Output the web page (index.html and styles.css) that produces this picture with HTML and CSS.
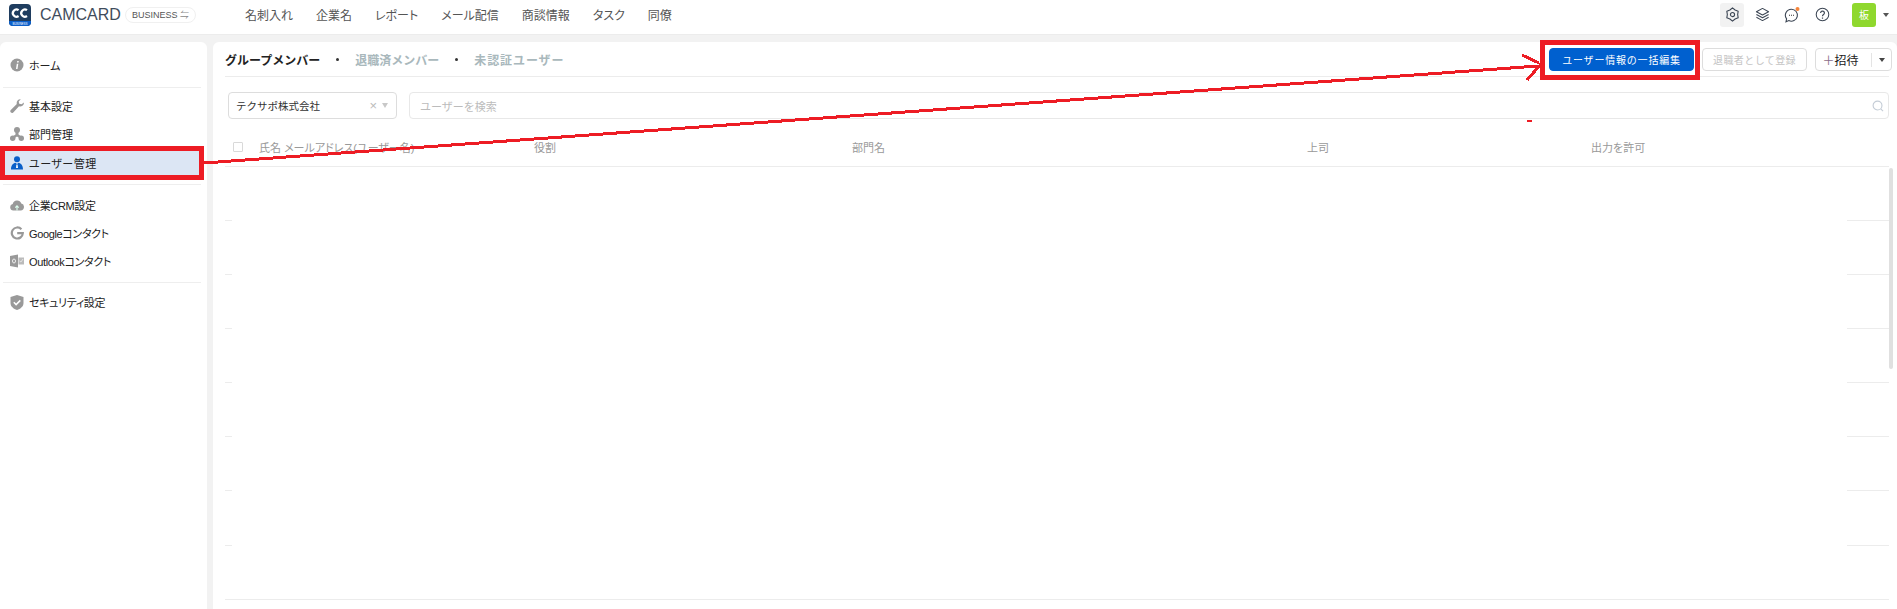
FILE: index.html
```html
<!DOCTYPE html>
<html lang="ja">
<head>
  <meta charset="UTF-8">
  <title>CAMCARD BUSINESS</title>
  <link rel="stylesheet" href="styles.css">
</head>
<body>
  <header class="topbar">
    <div class="brand">
      <svg class="logo" width="22" height="22" viewBox="0 0 22 22">
        <rect width="22" height="22" rx="4" fill="#1f3d5f"/>
        <path d="M0 17h22v1a4 4 0 0 1-4 4H4a4 4 0 0 1-4-4z" fill="#0b5fcb"/>
        <path d="M9.600 6.200A3.600 3.600 0 1 0 9.600 12M18 6.200A3.600 3.600 0 1 0 18 12" fill="none" stroke="#fff" stroke-width="2.200"/>
        <text x="11" y="20.500" text-anchor="middle" font-size="3" fill="#fff" font-family="Liberation Sans">BUSINESS</text>
      </svg>
      <span class="brand-name">CAMCARD</span>
      <span class="edition">BUSINESS <span class="edition-swap">⇋</span></span>
    </div>
    <nav class="main-nav">
      <a>名刺入れ</a>
      <a>企業名</a>
      <a>レポート</a>
      <a>メール配信</a>
      <a>商談情報</a>
      <a>タスク</a>
      <a>同僚</a>
    </nav>
    <div class="tools">
      <span class="tool tool-active">
        <svg width="15" height="15" viewBox="0 0 16 16" fill="none" stroke="#3c4654" stroke-width="1.200" stroke-linejoin="round"><path d="M8 1l2.750 2.240 3.310 1.260-.56 3.500.56 3.500-3.310 1.260L8 15l-2.750-2.240-3.310-1.260.56-3.500-.56-3.500 3.310-1.260z"/><circle cx="8" cy="8" r="2.200"/></svg>
      </span>
      <span class="tool">
        <svg width="15" height="15" viewBox="0 0 16 16" fill="none" stroke="#3c4654" stroke-width="1.100" stroke-linejoin="round"><path d="M8 1.500l6.500 3.500L8 8.500 1.500 5z"/><path d="M1.500 8L8 11.500 14.500 8"/><path d="M1.500 11L8 14.500 14.500 11"/></svg>
      </span>
      <span class="tool">
        <svg width="18" height="18" viewBox="0 0 18 18" fill="none"><path d="M8.500 3.200a6 6 0 1 1-2.700 11.400L3 15.800l.6-3A6 6 0 0 1 8.500 3.200z" stroke="#3c4654" stroke-width="1.100"/><path d="M6 9.200h1M8 9.200h1M10 9.200h1" stroke="#333" stroke-width="1.100"/><circle cx="14.500" cy="3" r="2" fill="#f5853b"/></svg>
      </span>
      <span class="tool">
        <svg width="15" height="15" viewBox="0 0 16 16" fill="none" stroke="#3c4654" stroke-width="1.100"><circle cx="8" cy="8" r="6.700"/><path d="M6 6.300a2 2 0 1 1 3.100 1.700c-.7.500-1.100.9-1.100 1.800" stroke-width="1.300"/><path d="M8 11.200v1.300" stroke-width="1.300"/></svg>
      </span>
      <span class="avatar">板</span>
      <span class="caret caret-top"></span>
    </div>
  </header>

  <main class="page">
    <aside class="sidebar">
      <a class="side-item side-home">
        <svg width="14" height="14" viewBox="0 0 14 14"><circle cx="7" cy="7" r="6.500" fill="#999"/><path d="M7.300 3h1.500l-.3 1.500H7zM6.800 5.700h1.500L7.500 11H6z" fill="#fff"/></svg>
        ホーム
      </a>
      <div class="side-line"></div>
      <a class="side-item">
        <svg width="14" height="14" viewBox="0 0 14 14"><path d="M14 3.500a3.800 3.800 0 0 1-5 3.700L3.500 13.300a1.700 1.700 0 0 1-2.700-2.300L6.800 5A3.800 3.800 0 0 1 10.800.200L8.700 2.400l.5 2.300 2.300.5z" fill="#999"/></svg>
        基本設定
      </a>
      <a class="side-item">
        <svg width="14" height="14" viewBox="0 0 14 14"><circle cx="7" cy="3" r="3" fill="#999"/><circle cx="2.700" cy="11.300" r="2.700" fill="#999"/><circle cx="11.300" cy="11.300" r="2.700" fill="#999"/><path d="M5.500 5h3v2.500l3 2-1.500 2L7 9.500 4 11.500l-1.500-2 3-2z" fill="#999"/></svg>
        部門管理
      </a>
      <a class="side-item side-active">
        <svg width="14" height="14" viewBox="0 0 14 14"><circle cx="7" cy="3.200" r="3" fill="#0a5fc8"/><path d="M1 13.500c0-4 2-6.500 4.500-6.800L7 8l1.500-1.300c2.500.3 4.500 2.800 4.500 6.800z" fill="#0a5fc8"/><path d="M6.400 8.500h1.200l.4 3.500H6z" fill="#fff"/></svg>
        <span class="side-active-text">ユーザー管理</span>
      </a>
      <div class="side-line"></div>
      <a class="side-item side-tight">
        <svg width="14" height="14" viewBox="0 0 14 14"><path d="M3.300 12.500A3.300 3.300 0 0 1 2.700 6 4.500 4.500 0 0 1 11.300 5.600 3.500 3.500 0 0 1 10.700 12.500z" fill="#999"/><path d="M7 12.500V8.200M5.300 9.700L7 7.900l1.700 1.800" fill="none" stroke="#dfe" stroke-width="1.100"/></svg>
        企業CRM設定
      </a>
      <a class="side-item side-tight">
        <svg width="14" height="14" viewBox="0 0 14 14"><path d="M11.400 3.300A5.500 5.500 0 1 0 12.800 7.200H7.200" fill="none" stroke="#999" stroke-width="2.200"/></svg>
        Googleコンタクト
      </a>
      <a class="side-item side-tight">
        <svg width="14" height="14" viewBox="0 0 14 14"><path d="M0 2l8-1.500v13L0 12z" fill="#999"/><rect x="8.500" y="3.500" width="5.500" height="7" fill="#bbb"/><ellipse cx="4" cy="7" rx="1.500" ry="2" fill="none" stroke="#eee"/><path d="M9.500 7l1.500 1 2-3" fill="none" stroke="#eee" stroke-width=".8"/></svg>
        Outlookコンタクト
      </a>
      <div class="side-line"></div>
      <a class="side-item side-tight">
        <svg width="14" height="15" viewBox="0 0 14 15"><path d="M7 0l6.500 2v6c0 3.500-3 5.800-6.500 7C3.500 13.800.500 11.500.500 8V2z" fill="#999"/><path d="M3.800 7.300l2.300 2.300 4.200-4.200" fill="none" stroke="#fff" stroke-width="1.500"/></svg>
        セキュリティ設定
      </a>
    </aside>

    <section class="content">
      <div class="tabs-bar">
        <div class="tabs">
          <span class="tab tab-current">グループメンバー</span>
          <span class="tab-dot"></span>
          <span class="tab">退職済メンバー</span>
          <span class="tab-dot"></span>
          <span class="tab tab-wide">未認証ユーザー</span>
        </div>
        <div class="actions">
          <button class="btn btn-primary">ユーザー情報の一括編集</button>
          <button class="btn btn-disabled">退職者として登録</button>
          <button class="btn btn-invite"><span class="plus">＋</span>招待<span class="invite-sep"></span><span class="caret"></span></button>
        </div>
      </div>

      <div class="filters">
        <div class="select">
          <span class="select-value">テクサポ株式会社</span>
          <span class="select-clear">×</span>
          <span class="caret caret-light"></span>
        </div>
        <div class="search">
          <span>ユーザーを検索</span>
          <svg width="12" height="12" viewBox="0 0 13 13" fill="none" stroke="#c4ccd6" stroke-width="1.200"><circle cx="6" cy="6" r="4.800"/><path d="M9.500 9.500l2.500 2.500"/></svg>
        </div>
      </div>

      <div class="table-head">
        <span class="col col-check"><span class="checkbox"></span></span>
        <span class="col col-name">氏名 メールアドレス(ユーザー名)</span>
        <span class="col col-role">役割</span>
        <span class="col col-dept">部門名</span>
        <span class="col col-boss">上司</span>
        <span class="col col-export">出力を許可</span>
      </div>

      <div class="table-body">
        <div class="row"><i></i><i></i></div>
        <div class="row"><i></i><i></i></div>
        <div class="row"><i></i><i></i></div>
        <div class="row"><i></i><i></i></div>
        <div class="row"><i></i><i></i></div>
        <div class="row"><i></i><i></i></div>
        <div class="row row-tall"><i></i><i></i></div>
        <div class="row row-last"></div>
        <div class="scrollbar"></div>
      </div>
    </section>
  </main>

  <!-- red markup drawn on top of the screenshot -->
  <div class="mark mark-side"></div>
  <div class="mark mark-btn"></div>
  <svg class="mark-arrow" width="1897" height="609" viewBox="0 0 1897 609" fill="none" stroke="#ed1c24" shape-rendering="crispEdges">
    <path d="M204 163L1538 66" stroke-width="3"/>
    <path d="M1522 55L1539 63" stroke-width="3"/>
    <path d="M1527 80L1541 64" stroke-width="3"/>
    <path d="M1527 121h5" stroke-width="2"/>
  </svg>
</body>
</html>
```

FILE: styles.css
```css
* {
  box-sizing: border-box;
}
html, body {
  height: 100%;
}
body {
  margin: 0;
  background-color: #f2f2f2;
  color: #333;
  font-family: "Liberation Sans", "Noto Sans CJK JP", sans-serif;
  font-size: 11px;
  overflow: hidden;
}

/* top bar */
.topbar {
  display: flex;
  align-items: center;
  height: 35px;
  padding: 0 8px 5px 9px;
  background: #fff;
  border-bottom: 1px solid #ececec;
}
.brand {
  display: flex;
  align-items: center;
  width: 236px;
}
.logo {
  margin-right: 9px;
}
.brand-name {
  width: 86px;
  font-size: 16px;
  color: #3f4c5c;
  margin-right: -1px;
}
.edition {
  display: flex;
  align-items: center;
  justify-content: space-between;
  width: 71px;
  height: 16px;
  padding: 0 6px;
  border: 1px solid #f0f0f0;
  border-radius: 8px;
  color: #555;
  font-size: 9px;
}
.edition-swap {
  color: #888;
}
.main-nav {
  display: flex;
  gap: 23px;
  font-size: 12px;
  font-feature-settings: "palt";
  color: #555;
}
.tools {
  display: flex;
  align-items: center;
  margin-left: auto;
}
.tool {
  display: flex;
  align-items: center;
  justify-content: center;
  width: 24px;
  height: 24px;
  margin-right: 6px;
  border-radius: 3px;
}
.tool-active {
  background: #f2f2f2;
}
.avatar {
  display: flex;
  align-items: center;
  justify-content: center;
  width: 24px;
  height: 24px;
  margin-left: 12px;
  border-radius: 3px;
  background: #8fd82e;
  color: #fff;
  font-size: 10px;
}
.caret {
  display: inline-block;
  width: 0;
  height: 0;
  border-left: 3px solid transparent;
  border-right: 3px solid transparent;
  border-top: 4px solid #444;
}
.caret-top {
  margin-left: 7px;
  border-left-width: 3.500px;
  border-right-width: 3.500px;
  border-top-color: #555;
}
.caret-light {
  border-left-width: 3.500px;
  border-right-width: 3.500px;
  border-top: 5px solid #c8c8c8;
}

/* page */
.page {
  display: flex;
  gap: 6px;
  height: calc(100% - 42px);
  margin-top: 7px;
}
.sidebar {
  width: 207px;
  padding-top: 9px;
  background: #fff;
  border-radius: 6px 6px 0 0;
}
.side-item {
  display: flex;
  align-items: center;
  gap: 5px;
  height: 28px;
  padding-left: 10px;
  color: #222;
  font-size: 11px;
  font-feature-settings: "palt";
}
.side-tight {
  letter-spacing: -.35px;
}
.side-active {
  height: 30px;
  margin-right: 8px;
  background: #dce6f4;
}
.side-active-text {
  letter-spacing: .5px;
}
.side-line {
  height: 1px;
  margin: 7px 6px 5px 3px;
  background: #eeeeee;
}
.side-home + .side-line {
  margin: 8px 6px 4px 3px;
}
.side-active + .side-line {
  margin: 6px 6px 6px 3px;
}

/* content */
.content {
  flex: 1;
  position: relative;
  padding: 0 8px 0 12px;
  background: #fff;
  border-radius: 6px 6px 0 0;
}
.tabs-bar {
  display: flex;
  align-items: center;
  justify-content: space-between;
  height: 35px;
  padding-top: 1px;
  border-bottom: 1px solid #ececec;
}
.tabs {
  display: flex;
  align-items: center;
  font-size: 12px;
}
.tab {
  font-weight: bold;
  color: #a9b8bc;
}
.tab-current {
  color: #222;
}
.tab-wide {
  letter-spacing: .9px;
}
.tab-dot {
  width: 3px;
  height: 3px;
  margin: 0 16px;
  border-radius: 50%;
  background: #333;
}
.actions {
  display: flex;
  gap: 8px;
  margin-right: -3px;
}
.btn {
  display: flex;
  align-items: center;
  justify-content: center;
  height: 23px;
  padding: 0;
  border: 1px solid #ddd;
  border-radius: 4px;
  background: #fff;
  font-family: inherit;
  font-size: 10px;
}
.btn-primary {
  width: 145px;
  border-color: #0060cf;
  background: #0060cf;
  color: #fff;
  letter-spacing: .8px;
}
.btn-disabled {
  width: 105px;
  color: #c4c4c4;
  letter-spacing: .4px;
}
.btn-invite {
  width: 77px;
  color: #222;
  font-size: 12px;
}
.plus {
  color: #8a6d8a;
}
.invite-sep {
  width: 1px;
  height: 14px;
  margin: 0 7px 0 12px;
  background: #e4e4e4;
}

.filters {
  display: flex;
  gap: 12px;
  padding: 15px 0 0 3px;
}
.select {
  display: flex;
  align-items: center;
  width: 169px;
  height: 27px;
  padding: 0 8px 0 7px;
  border: 1px solid #ddd;
  border-radius: 4px;
}
.select-value {
  flex: 1;
  font-size: 10.500px;
}
.select-clear {
  margin-right: 5px;
  color: #bbb;
  font-size: 13px;
}
.search {
  flex: 1;
  display: flex;
  align-items: center;
  justify-content: space-between;
  height: 27px;
  padding: 0 4px 0 10px;
  border: 1px solid #e8e8e8;
  border-radius: 4px;
  color: #bcbcbc;
}

/* table */
.table-head {
  display: flex;
  align-items: center;
  height: 48px;
  padding-top: 9px;
  border-bottom: 1px solid #ececec;
  color: #999;
  font-size: 11px;
  font-feature-settings: "palt";
}
.col-check {
  width: 34px;
  padding-left: 8px;
}
.col-name {
  width: 275px;
}
.col-role {
  width: 318px;
}
.col-dept {
  width: 455px;
}
.col-boss {
  width: 284px;
}
.checkbox {
  display: block;
  width: 10px;
  height: 10px;
  border: 1px solid #d9d9d9;
  border-radius: 1px;
}
.table-body {
  position: relative;
}
.row {
  display: flex;
  justify-content: space-between;
  align-items: flex-end;
  height: 54px;
}
.row-tall {
  height: 55px;
}
.row-last {
  border-bottom: 1px solid #ececec;
}
.row i {
  display: block;
  width: 7px;
  height: 1px;
  background: #ececec;
}
.row i:last-child {
  width: 42px;
}
.scrollbar {
  position: absolute;
  top: 1px;
  right: -4px;
  width: 4px;
  height: 201px;
  border-radius: 2px;
  background: #e0e0e0;
}

/* red annotations */
.mark {
  position: absolute;
  border: 5px solid #ed1c24;
}
.mark-side {
  left: 0;
  top: 146px;
  width: 204px;
  height: 34px;
}
.mark-btn {
  left: 1540px;
  top: 40px;
  width: 160px;
  height: 40px;
}
.mark-arrow {
  position: absolute;
  left: 0;
  top: 0;
  pointer-events: none;
}
```
